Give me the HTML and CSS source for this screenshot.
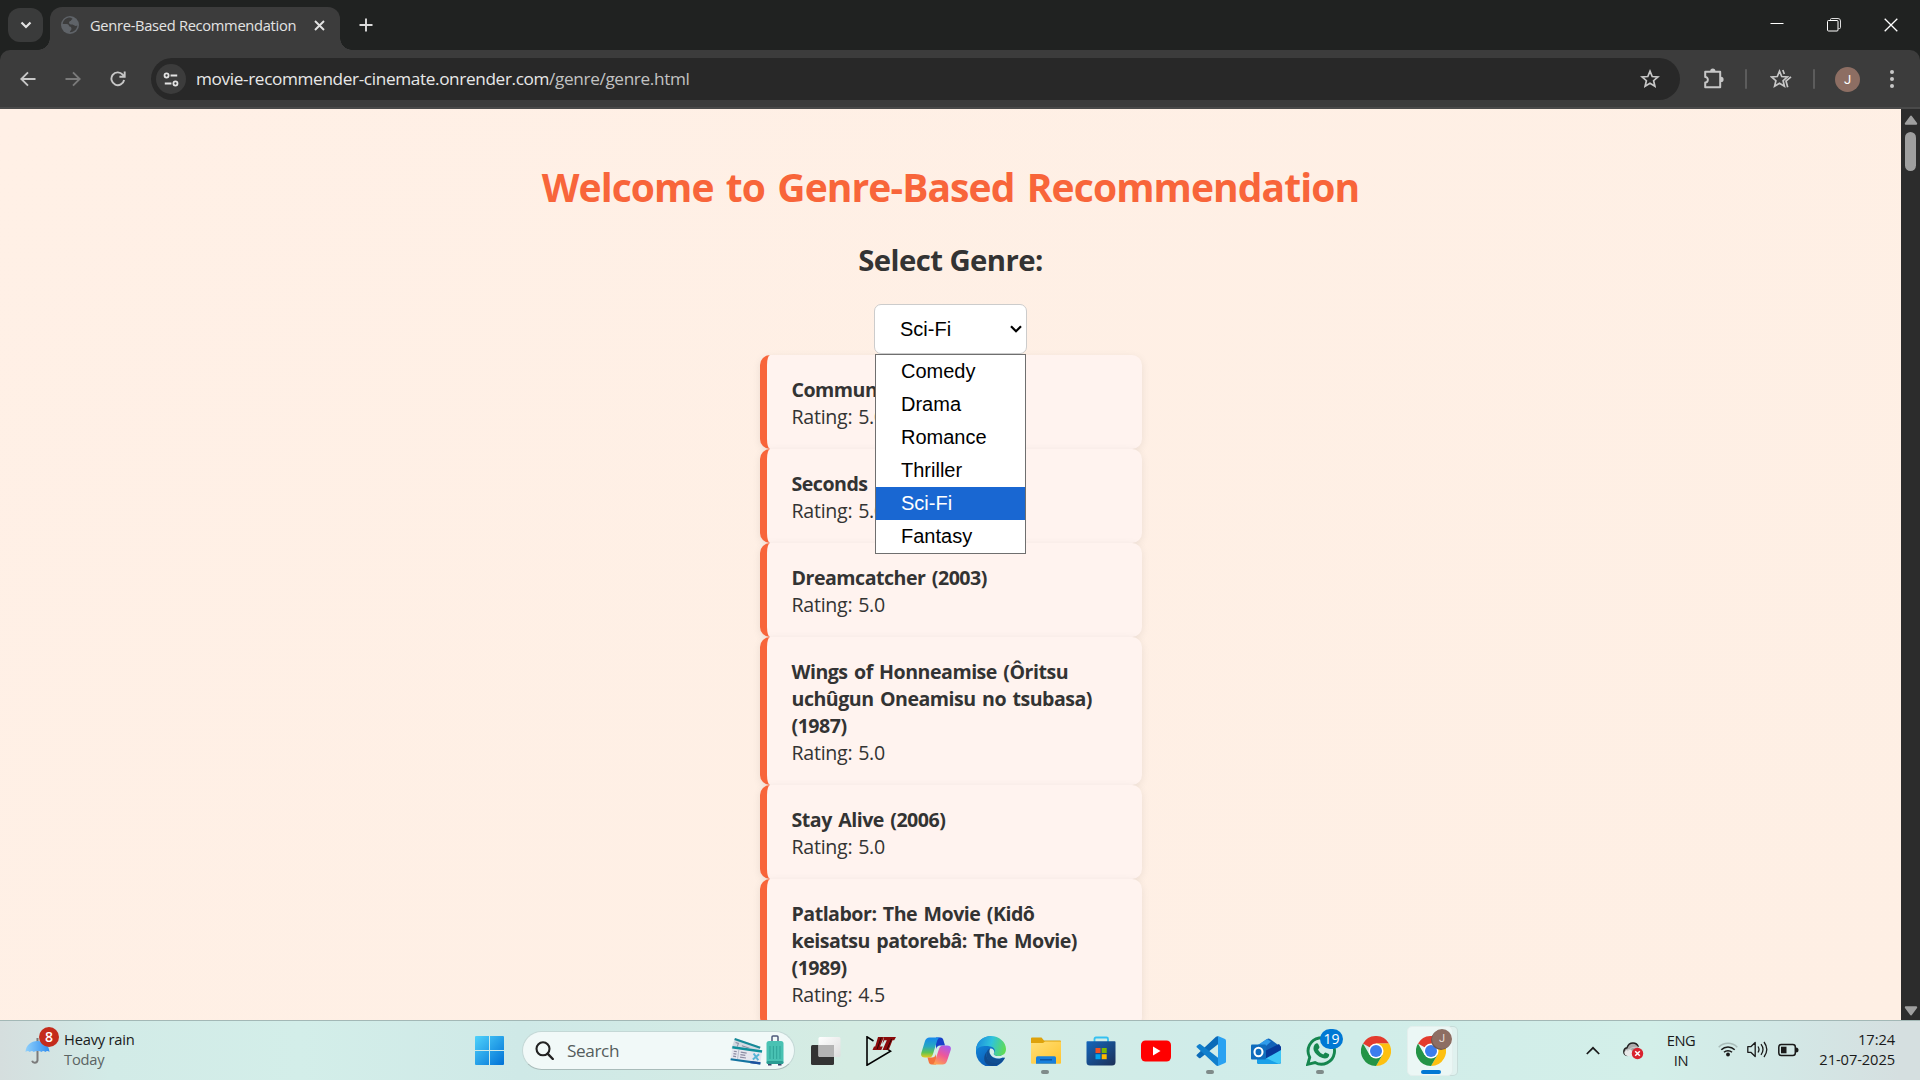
FILE: index.html
```html
<!DOCTYPE html>
<html lang="en">
<head>
<meta charset="utf-8">
<title>Genre-Based Recommendation</title>
<link rel="stylesheet" href="styles.css">
</head>
<body>
<div class="screen">
  <header class="tabstrip">
    <button class="tab-search"><svg width="12" height="8" viewBox="0 0 12 8"><path d="M1.500 1.500 6 6l4.500-4.500" fill="none" stroke="#e3e3e3" stroke-width="2.200"/></svg></button>
    <div class="tab">
      <svg class="favicon" width="18" height="18" viewBox="0 0 18 18"><circle cx="9" cy="9" r="9" fill="#5f6368"/><path d="M8 1.600C5 2 2 4.500 1.700 8l4 .1c1.600 0 2.300 1 2.300 2.200 1.500.2 2.500 1.100 2.500 2.500 0 1.500-1.500 1.700-1.700 3.500 4.200 0 7.300-3 7.600-6.700-1.200.7-2.400.6-3.300-.3-.8-.9-2.300-.9-3.500-.9-1-.1-1.600-.9-1.600-1.800 0-.9.8-1.500 1.700-1.500.3-1.300 1.200-1.700 2-2.200C10.500 1.900 9.200 1.500 8 1.600z" fill="#3c3c3c"/></svg>
      <span class="tab-title">Genre-Based Recommendation</span>
      <svg class="tab-close" width="11" height="11" viewBox="0 0 11 11"><path d="M1 1l9 9M10 1l-9 9" stroke="#e3e3e3" stroke-width="1.900"/></svg>
    </div>
    <svg class="tab-new" width="14" height="14" viewBox="0 0 14 14"><path d="M7 .5v13M.5 7h13" stroke="#dcdcdc" stroke-width="1.900"/></svg>
    <div class="window-controls">
      <svg width="14" height="14" viewBox="0 0 14 14"><path d="M.5 5.500h13" stroke="#fff"/></svg>
      <svg width="14" height="14" viewBox="0 0 14 14"><path d="M3.500 2.500v-1q0-1 1-1h6.500q2.500 0 2.500 2.500v6.500q0 1-1 1h-1" fill="none" stroke="#ddd"/><rect x=".5" y="2.500" width="10.500" height="10.500" rx="1" fill="none" stroke="#fff"/></svg>
      <svg width="14" height="14" viewBox="0 0 14 14"><path d="M.7.7l12.600 12.600M13.300.7.7 13.300" stroke="#fff" stroke-width="1.300"/></svg>
    </div>
  </header>

  <nav class="toolbar">
    <div class="nav-buttons">
      <svg width="16" height="16" viewBox="0 0 16 16"><path d="M15.500 8H1.800M8 1.300 1.300 8 8 14.700" fill="none" stroke="#c7c7c7" stroke-width="1.900"/></svg>
      <svg width="16" height="16" viewBox="0 0 16 16"><path d="M.5 8h13.700M8 1.300 14.700 8 8 14.700" fill="none" stroke="#7a7a7a" stroke-width="1.900"/></svg>
      <svg width="16" height="16" viewBox="0 0 16 16"><path d="M14.100 9A6.400 6.400 0 1 1 12.700 3.600L14.200 5.200M14.700.5v5.300H9.400" fill="none" stroke="#c7c7c7" stroke-width="1.900"/></svg>
    </div>
    <div class="omnibox">
      <span class="site-info"><svg width="16" height="15" viewBox="0 0 18 16"><g fill="none" stroke="#e3e3e3" stroke-width="2"><circle cx="4" cy="3.500" r="2.300"/><path d="M8.500 3.500h7.500M2 12.500h7.500"/><circle cx="14" cy="12.500" r="2.300"/></g></svg></span>
      <span class="url"><span class="url-host">movie-recommender-cinemate.onrender.com</span><span class="url-path">/genre/genre.html</span></span>
      <svg class="bookmark" width="20" height="20" viewBox="0 0 20 20"><path d="M10 2.200l2.200 5.300 5.700.5-4.300 3.700 1.300 5.600-4.900-3-4.900 3 1.300-5.600L2.100 8l5.700-.5z" fill="none" stroke="#c7c7c7" stroke-width="1.700"/></svg>
    </div>
    <div class="toolbar-actions">
      <svg class="extensions" width="22" height="22" viewBox="0 0 22 22"><path d="M2.200 3.700h15v15.500h-15v-4.700c3.400.3 3.600-5.700 0-5.600z" fill="none" stroke="#c7c7c7" stroke-width="2" stroke-linejoin="round"/><path d="M7.200 3a2.600 2.600 0 0 1 5.200 0zM18 8.800a2.600 2.600 0 0 1 0 5.200z" fill="#c7c7c7"/></svg>
      <span class="divider"></span>
      <svg class="favorites" width="22" height="20" viewBox="0 0 22 20"><g fill="none" stroke="#c7c7c7" stroke-width="1.700"><path d="M9.500 2.200l2.200 5.300 5.700.5-4.300 3.700 1.300 5.600-4.900-3-4.900 3 1.300-5.600L1.600 8l5.700-.5z"/><path d="M12.800 1l1.500 4M21 7.800l-5 4.200 1.700 6.200" /></g></svg>
      <span class="divider"></span>
      <span class="avatar">J</span>
      <svg class="menu" width="6" height="20" viewBox="0 0 6 20"><g fill="#c7c7c7"><circle cx="3" cy="3" r="2"/><circle cx="3" cy="10" r="2"/><circle cx="3" cy="17" r="2"/></g></svg>
    </div>
  </nav>

  <div class="viewport">
    <main class="page">
      <h1>Welcome to Genre-Based Recommendation</h1>
      <h2>Select Genre:</h2>
      <div class="select">
        <span>Sci-Fi</span>
        <svg width="12" height="8" viewBox="0 0 12 8"><path d="M1 1.300l5 5 5-5" fill="none" stroke="#000" stroke-width="2.200"/></svg>
        <ul class="options">
          <li>Comedy</li><li>Drama</li><li>Romance</li><li>Thriller</li><li class="selected">Sci-Fi</li><li>Fantasy</li>
        </ul>
      </div>
      <div class="movies">
        <article><strong>Commun</strong><span>Rating: 5.0</span></article>
        <article><strong>Seconds</strong><span>Rating: 5.0</span></article>
        <article><strong>Dreamcatcher (2003)</strong><span>Rating: 5.0</span></article>
        <article><strong>Wings of Honneamise (Ôritsu uchûgun Oneamisu no tsubasa) (1987)</strong><span>Rating: 5.0</span></article>
        <article><strong>Stay Alive (2006)</strong><span>Rating: 5.0</span></article>
        <article><strong>Patlabor: The Movie (Kidô keisatsu patorebâ: The Movie) (1989)</strong><span>Rating: 4.5</span></article>
      </div>
    </main>
    <aside class="scrollbar">
      <svg width="14" height="10" viewBox="0 0 14 10"><path d="M7 1.500 12.200 8.700H1.800z" fill="#9f9f9f" stroke="#9f9f9f" stroke-width="2" stroke-linejoin="round"/></svg>
      <span class="thumb"></span>
      <svg class="down" width="14" height="10" viewBox="0 0 14 10"><path d="M7 8.500 12.200 1.300H1.800z" fill="#9f9f9f" stroke="#9f9f9f" stroke-width="2" stroke-linejoin="round"/></svg>
    </aside>
  </div>

  <footer class="taskbar">
    <div class="weather">
      <span class="weather-icon">
        <svg width="26" height="28" viewBox="0 0 26 28"><defs><linearGradient id="umb" x1="0" x2="1"><stop offset="0" stop-color="#8fd0fb"/><stop offset="1" stop-color="#2f8df0"/></linearGradient></defs><path d="M12.500 1v22.500a2.800 2.800 0 0 1-5.400.2" fill="none" stroke="#7b7b7b" stroke-width="2"/><path d="M.5 15C1 8 6 4 12.500 4S24 8 24.500 15c-1.500-1.300-2.800-1.300-4.200 0-1.500-1.300-2.500-1.300-3.900 0-1.500-1.300-6-1.300-7.600 0-1.400-1.300-2.600-1.300-4 0-1.400-1.300-2.900-1.300-4.300 0z" fill="url(#umb)"/></svg>
        <b class="weather-badge">8</b>
      </span>
      <span class="weather-text"><span>Heavy rain</span><span class="muted">Today</span></span>
    </div>

    <div class="dock">
      <svg class="start" width="29" height="29" viewBox="0 0 29 29"><defs><linearGradient id="win" x1="0" y1="0" x2="1" y2="1"><stop offset="0" stop-color="#4fd2fb"/><stop offset="1" stop-color="#0071d6"/></linearGradient></defs><path d="M1 0h13v14H0V1q0-1 1-1zM15 0h13q1 0 1 1v13H15zM0 15h14v14H1q-1 0-1-1zM15 15h14v13q0 1-1 1H15z" fill="url(#win)"/></svg>
      <div class="search">
        <svg width="19" height="19" viewBox="0 0 19 19"><circle cx="8" cy="7.800" r="6.500" fill="none" stroke="#222" stroke-width="2.100"/><path d="M12.600 12.600l5.200 5.400" stroke="#222" stroke-width="2.400" stroke-linecap="round"/></svg>
        <span>Search</span>
        <svg class="travel" width="54" height="31" viewBox="0 0 54 31">
          <g transform="translate(5 3) rotate(19)"><path d="M0 0h27v11H0z" fill="#d3dae2"/><path d="M0 0h27v2.200H0z" fill="#158a98"/><path d="M2 4h3v5M9 5h8M9 8h8" fill="none" stroke="#8b8fa3"/></g>
          <g transform="translate(2.500 11) rotate(8)"><path d="M0 0h30v14.500H0z" fill="#e6e7ef"/><path d="M0 0h30v2.500H0z" fill="#0f8f9b"/><path d="M0 12.300h30v2.200H0z" fill="#1474a0"/><path d="M20 12.300h10v2.200H20z" fill="#1e4f9e"/><path d="M2 5h3M2 7.500h3M2 10h3M9 5h6M9 7.500h5M9 10h6" fill="none" stroke="#8d8ca3" stroke-width="1.200"/><path d="M6.800 3v9" stroke="#b9bccb"/><path d="M22 4.500l5.500 6M27.500 4.500l-5.500 6" stroke="#58b4d6" stroke-width="2"/></g>
          <path d="M42 7V2q0-1 1-1h4q1 0 1 1v5" fill="none" stroke="#4d5879" stroke-width="1.500"/><path d="M38 28.500h3.500v2H38zM48 28.500h3.500v2H48z" fill="#39456b"/><rect x="36.500" y="6" width="17" height="23" rx="2.500" fill="#49c2b3"/><rect x="36.500" y="26" width="17" height="3" rx="1.500" fill="#2a9c93"/><path d="M40 11v13M43.400 11v13M46.700 11v13M50 11v13" stroke="#2fa398" stroke-width="1"/>
        </svg>
      </div>
      <div class="apps">
        <span class="app"><svg width="30" height="30" viewBox="0 0 30 30"><defs><linearGradient id="tv" x1="0" y1="0" x2="1" y2="1"><stop offset="0" stop-color="#fff"/><stop offset="1" stop-color="#ddd"/></linearGradient></defs><rect x="0" y="9" width="23" height="20" rx="1.500" fill="#333"/><rect x="7.500" y="1" width="22" height="20" rx="1.500" fill="url(#tv)"/><path d="M7.500 9H23v12H9q-1.500 0-1.500-1.500z" fill="#b4b4b4"/></svg></span>
        <span class="app"><svg width="30" height="30" viewBox="0 0 30 30"><path d="M7.500 5 1 .8v28.400L24.500 15.200l-3-2" fill="none" stroke="#000" stroke-width="1.600"/><path d="M12 1h6l-4 9.500h2.800l-1.500 3.500H6.500L8 10.500h1.200z" fill="#8a0b0b"/><path d="M18 1h12l-1.800 3.200h-1.700L22.700 14h-6.200l4.300-9.800h-2.400l-2 3.800z" fill="#8a0b0b"/><path d="M15.200 1.500l-4 11.500M25.500 3l-4.500 10.500" stroke="#000" stroke-width=".7"/></svg></span>
        <span class="app"><svg width="30" height="28" viewBox="0 0 30 28"><defs><linearGradient id="cpa" x1="0" y1="0" x2="0" y2="1"><stop offset="0" stop-color="#1589ee"/><stop offset=".45" stop-color="#28a8bf"/><stop offset=".75" stop-color="#5fc453"/><stop offset="1" stop-color="#e9c91d"/></linearGradient><linearGradient id="cpb" x1="0.800" y1="0" x2=".3" y2="1"><stop offset="0" stop-color="#a75cf0"/><stop offset=".5" stop-color="#ee5899"/><stop offset="1" stop-color="#ffa150"/></linearGradient></defs><path d="M15 .5h4.500q2 0 2.700 2L24 8.500h-5q-3 0-4 3.500z" fill="#1640c8"/><path d="M8.500.5H19q-2 .3-2.800 3L12 17q-1 3.500-4 3.500H4Q-.8 20.500.3 16L4 4Q5.200.5 8.500.5z" fill="url(#cpa)"/><path d="M15 27.500h-4.500q-2 0-2.600-2L6.500 20.500H11q3 0 4-3.500z" fill="#f4733c"/><path d="M21.500 27.500H11q2-.3 2.800-3L18 12q1-3.500 4-3.500h4q4.800 0 3.700 4.500L26 24q-1.200 3.500-4.500 3.500z" fill="url(#cpb)"/></svg></span>
        <span class="app"><svg width="30" height="30" viewBox="0 0 30 30"><defs><linearGradient id="eda" x1="0" y1="0.300" x2="1" y2=".5"><stop offset="0" stop-color="#1b8bdc"/><stop offset=".5" stop-color="#2fc3dc"/><stop offset="1" stop-color="#5fdb55"/></linearGradient><linearGradient id="edb" x1="0" y1="0" x2="0.600" y2="1"><stop offset="0" stop-color="#1493e4"/><stop offset="1" stop-color="#0a55b0"/></linearGradient></defs><path d="M0 13C1 5 8 0 15 0l4 13 9.500 9.500A15 15 0 0 1 0 15z" fill="url(#edb)"/><path d="M0 13C1 5 7.500 0 15 0c8 0 15 6 15 13 0 5-3.500 7-7.500 7-3 0-5.500-1-4.500-3 2-3 0-6-4-6.500C9 9.500 2 10 0 15z" fill="url(#eda)"/><path d="M11 15.500c-2.500 6 2 11.500 8.500 11.300 3.500 0 6-1.800 8.500-4.300C24.500 29 18 31 13 29.300 7 27 7 20 11 15.500z" fill="#114a8b"/><path d="M11 15.500c.5-2 2.500-3 4-3-2 3-1 8 3 9.700 3.500 1.500 7.500.8 10.200-.8 1 0 .7.800 0 1.800-4 5-12 5.500-16 .8-2-2.500-2-6-1.200-8.500z" fill="#114f93"/><path d="M14.200 12.600c2.200-.4 4 1.300 4 3.400 0 1-.6 1.500-.4 2.200.4 1 2 1.800 4.200 1.900 1.900.1 4-.2 5.700-1.600-.3 1.200.7 1.700.5 2.500-2.700 1.500-7 2.300-10.300.6-4-2-5.400-6-3.700-9z" fill="#d6eeea"/></svg></span>
        <span class="app running"><svg width="30" height="27" viewBox="0 0 30 27"><defs><linearGradient id="fd" x1="0" y1="0" x2="1" y2="1"><stop offset="0" stop-color="#ffdf77"/><stop offset="1" stop-color="#ffc42e"/></linearGradient></defs><path d="M0 1.500Q0 .5 1 .5h9.500l2.500 3h16q1 0 1 1V9H0z" fill="#dea20b"/><path d="M0 6h12l2-1.500h16V26q0 .7-1 .7H1q-1 0-1-1z" fill="url(#fd)"/><path d="M5 26.700v-6q0-1.500 1.500-1.500h17q1.500 0 1.500 1.500v6z" fill="#1780dc"/><path d="M9 22.800h12" stroke="#0a4e9b" stroke-width="1.300"/></svg></span>
        <span class="app"><svg width="30" height="30" viewBox="0 0 30 30"><defs><linearGradient id="ms" x1="0" y1="0" x2="1" y2="1"><stop offset="0" stop-color="#1466bb"/><stop offset="1" stop-color="#1c3058"/></linearGradient></defs><path d="M8.500 6V3q0-1.500 1.500-1.500h10.500Q22 1.500 22 3v3" fill="none" stroke="#35c1f1" stroke-width="1.800"/><path d="M.5 6q0-.8.800-.8h27.400q.8 0 .8.800v20q0 3.500-3.500 3.500H4Q.5 29.500.5 26z" fill="url(#ms)"/><path d="M9.500 12h5v5h-5z" fill="#f25022"/><path d="M15.700 12h5v5h-5z" fill="#7fba00"/><path d="M9.500 18.200h5v5h-5z" fill="#00a4ef"/><path d="M15.700 18.200h5v5h-5z" fill="#ffb900"/></svg></span>
        <span class="app"><svg width="30" height="30" viewBox="0 0 30 30"><rect y="4.500" width="30" height="21" rx="4.500" fill="#f00"/><path d="M12 10.500v9l7.500-4.500z" fill="#fff"/></svg></span>
        <span class="app running"><svg width="30" height="30" viewBox="0 0 30 30"><path d="M22 0l7 3q1 .5 1 1.500v21q0 1-1 1.500l-7 3z" fill="#2aa2f2"/><path d="M22 .2v8L4.500 22q-.8.600-1.500 0l-2-1.700q-1-.9 0-1.800L20 .8q1-.9 2-.6z" fill="#0a6ab8"/><path d="M22 29.800v-8L4.500 8.200q-.8-.6-1.500 0L1 9.800q-1 .9 0 1.800L20 29.200q1 .9 2 .6z" fill="#107fcd"/></svg></span>
        <span class="app"><svg width="30" height="30" viewBox="0 0 30 30"><path d="M6 10 16 3q1.500-1 3 0l11 8v15q0 2-2 2H8q-2 0-2-2z" fill="#1262b8"/><path d="M6 9.500 16 3l4 2.500-9 8z" fill="#2f9bea"/><path d="M8 18 28 8l2 3v6L16 25z" fill="#07399a"/><path d="M30 14v12q0 2-2 2H8l6-5z" fill="#3fc6f6"/><path d="M6 18l22 10H8q-2 0-2-2z" fill="#1aa0e8"/><rect y="8.500" width="15" height="15" rx="1" fill="#0f6cbd"/><ellipse cx="7.500" cy="16" rx="4" ry="4.300" fill="none" stroke="#fff" stroke-width="2.100"/></svg></span>
        <span class="app running"><svg width="30" height="30" viewBox="0 0 30 30"><path d="M1.700 28.300l2-7A13.200 13.200 0 1 1 9 26.600z" fill="none" stroke="#15864f" stroke-width="2.900"/><path d="M10 7.500q1.500-.6 2.200.5l1.300 3q.2.800-1.500 2.700 1.800 3.300 5.300 4.700 1.600-2 2.200-1.900l3.300 1.600q.8.600.2 2c-1 2.500-4 3-6.500 2C12 20.500 9 17.500 7.700 14.200 7 11.500 8 8.500 10 7.500z" fill="#15864f"/></svg><b class="count">19</b></span>
        <span class="app"><svg width="30" height="30" viewBox="0 0 30 30"><use href="#chrome"/></svg></span>
        <span class="app active"><svg width="30" height="30" viewBox="0 0 30 30"><g id="chrome"><path d="M15 15 2 7.500A15 15 0 0 1 28 7.500H15z" fill="#e33b2e"/><path d="M15 7.500h13A15 15 0 0 1 15 30l6.500-11.250z" fill="#fdc010"/><path d="M8.500 18.750 2 7.500A15 15 0 0 0 15 30l6.500-11.250z" fill="#239446"/><circle cx="15" cy="15" r="7.500" fill="#fff"/><circle cx="15" cy="15" r="6" fill="#3b7ded"/></g></svg><b class="profile">J</b></span>
      </div>
    </div>

    <div class="tray">
      <svg class="chevron" width="14" height="9" viewBox="0 0 14 9"><path d="M.8 8 7 1.800 13.200 8" fill="none" stroke="#1a1a1a" stroke-width="1.700"/></svg>
      <svg class="cloud" width="21" height="18" viewBox="0 0 21 18"><path d="M4.500 13.500Q.8 13 .8 9.700.8 6.500 4 5.800 5.500 1 10 1q4 0 5.500 4" fill="#aaa" stroke="#222" stroke-width="1.400"/><path d="M4.500 14Q1 13.500 1.500 10q3-4 7-2l2 6z" fill="#e9e9e9"/><path d="M15.500 5Q9 4 4 9" stroke="#ccc" fill="none"/><circle cx="14.500" cy="11.500" r="5.700" fill="#d9232e"/><path d="M12.200 9.200l4.600 4.600M16.800 9.200l-4.600 4.600" stroke="#fff" stroke-width="1.500"/></svg>
      <span class="lang"><span>ENG</span><span>IN</span></span>
      <svg class="wifi" width="20" height="16" viewBox="0 0 20 16"><g fill="none" stroke="#1a1a1a" stroke-width="1.500"><path d="M.7 6.200a13 13 0 0 1 18.600 0" stroke="#a9bcb9"/><path d="M3.300 8.700a9.500 9.500 0 0 1 13.400 0"/><path d="M6 11.300a5.700 5.700 0 0 1 8 0"/></g><circle cx="10" cy="13.500" r="1.900" fill="#1a1a1a"/></svg>
      <svg class="volume" width="21" height="17" viewBox="0 0 21 17"><g fill="none" stroke="#1a1a1a" stroke-width="1.300"><path d="M.8 5.700h3l4.400-4.200v14L3.800 11.300h-3z" stroke-linejoin="round"/><path d="M11 5.500q2 3 0 6M14 3.200q4 5.300 0 10.600M17 1q5.600 7.500 0 15"/></g></svg>
      <svg class="battery" width="21" height="14" viewBox="0 0 21 14"><rect x=".8" y="1.500" width="16.500" height="11" rx="2.500" fill="none" stroke="#1a1a1a" stroke-width="1.500"/><path d="M3 3.700h5.500v6.600H3z" fill="#1a1a1a"/><path d="M18 4.500q2.500 0 2.500 2.500T18 9.500z" fill="#1a1a1a"/></svg>
      <span class="clock"><span>17:24</span><span>21-07-2025</span></span>
    </div>
  </footer>
</div>
</body>
</html>
```
FILE: styles.css
```css
* { box-sizing: border-box; margin: 0; padding: 0; }
body { width: 1920px; height: 1080px; overflow: hidden; font-family: "Open Sans", "Noto Sans", sans-serif; }
svg { display: block; flex: none; }
.screen { display: flex; flex-direction: column; width: 1920px; height: 1080px; background: #202221; }

.tabstrip { display: flex; height: 50px; flex: none; padding-left: 8px; background: #202221; }
.tab-search { width: 35px; height: 34px; margin: 8px 7px 0 0; display: grid; place-items: center; background: #3a3b3b; border: 0; border-radius: 12px; }
.tab { position: relative; display: flex; align-items: center; width: 290px; height: 43px; margin-top: 7px; padding: 0 15px 7px 11px; background: #3c3c3c; border-radius: 12px 12px 0 0; }
.tab::before, .tab::after { content: ""; position: absolute; bottom: 0; width: 12px; height: 12px; }
.tab::before { left: -12px; background: radial-gradient(circle at 0 0, transparent 11.5px, #3c3c3c 12px); }
.tab::after { right: -12px; background: radial-gradient(circle at 100% 0, transparent 11.5px, #3c3c3c 12px); }
.tab-title { flex: 1; margin-left: 11px; font-size: 14.7px; letter-spacing: -.31px; line-height: 20px; color: #e3e3e3; white-space: nowrap; }
.tab-new { margin: 18px 0 0 19px; }
.window-controls { display: flex; gap: 43px; margin: 18px 22px 0 auto; }

.toolbar { display: flex; align-items: flex-start; flex: none; height: 59px; padding-top: 8px; background: #3c3c3c; border-bottom: 2px solid #4a4a4a; border-radius: 10px 10px 0 0; }
.nav-buttons { display: flex; gap: 29px; width: 151px; padding: 13px 0 0 20px; flex: none; }
.omnibox { display: flex; align-items: center; width: 1529px; height: 42px; padding: 0 20px 0 5px; background: #282828; border-radius: 21px; }
.site-info { display: grid; place-items: center; width: 30px; height: 30px; border-radius: 50%; background: #3c3c3c; }
.url { flex: 1; margin-left: 10px; font-size: 17.2px; letter-spacing: -.36px; line-height: 24px; color: #e8e8e8; white-space: nowrap; }
.url-path { color: #c2c2c2; }
.toolbar-actions { display: flex; align-items: center; height: 42px; }
.extensions { margin-left: 23px; }
.divider { width: 2px; height: 20px; background: #5c5c5c; border-radius: 1px; }
.extensions + .divider { margin-left: 20px; }
.favorites { margin-left: 23px; }
.favorites + .divider { margin-left: 21px; }
.avatar { display: grid; place-items: center; width: 25px; height: 25px; margin-left: 20px; border-radius: 50%; background: #8d6e63; color: #fff; font: 13px/25px Roboto, sans-serif; }
.menu { margin-left: 29px; }

.viewport { display: flex; flex: none; height: 911px; }
.page { display: flex; flex-direction: column; align-items: center; width: 1901px; height: 911px; padding-top: 51px; overflow: hidden; background: linear-gradient(135deg, #fff0e6, #feefe4); color: #333; }
h1 { font-size: 39px; letter-spacing: -.9px; word-spacing: 3px; line-height: 54px; color: #f8653a; white-space: nowrap; }
h2 { margin: 26px 0 24px; font-size: 29.3px; letter-spacing: -.56px; line-height: 40px; white-space: nowrap; }
.select { position: relative; z-index: 1; display: flex; align-items: center; justify-content: space-between; width: 153px; height: 50px; flex: none; padding: 0 4px 0 25px; background: #fff; border: 1px solid #ccc; border-radius: 7px; font: 20px "Liberation Sans", Arial, sans-serif; color: #000; }
.options { position: absolute; left: 0; top: 49px; width: 151px; border: 1px solid #6f6f6f; background: #fff; list-style: none; }
.options li { height: 33px; padding-left: 25px; line-height: 33px; }
.options .selected { background: #1967d2; color: #fff; }
.movies { width: 382px; margin-top: 1px; }
article { display: flex; flex-direction: column; padding: 21px 45px 19px 25px; border-left: 7px solid #f8653a; border-radius: 10px; background: #fff3ef; box-shadow: 0 2px 8px rgba(0, 0, 0, .08); font-size: 19.6px; letter-spacing: -.27px; word-spacing: 1px; line-height: 27px; }
article strong { letter-spacing: -.5px; word-spacing: 1.8px; }

.scrollbar { display: flex; flex-direction: column; align-items: center; width: 19px; padding: 6px 0 4px; background: #2c2c2c; }
.thumb { width: 11px; height: 39px; margin-top: 7px; border-radius: 6px; background: #9f9f9f; }
.down { margin-top: auto; }

.taskbar { display: flex; flex: none; height: 60px; border-top: 1px solid #a3b8b6; background: linear-gradient(90deg, #d5dede 0, #d2ebe7 110px, #d3eee9 300px, #cfe9e7 520px, #d5ece3 850px, #d0ece9 1200px, #d3efe9 1650px, #d3e8e6 1780px, #d5dfe0 1900px); color: #1a1a1a; font-size: 14.7px; letter-spacing: -.1px; line-height: 20px; }
.weather { display: flex; width: 475px; padding-left: 25px; }
.weather-icon { position: relative; width: 26px; padding-top: 16px; }
.weather-badge { position: absolute; left: 14px; top: 6px; width: 20px; height: 20px; border-radius: 50%; background: #c42b1c; color: #fff; font-size: 14px; font-weight: 600; text-align: center; }
.weather-text { display: flex; flex-direction: column; margin: 8px 0 0 13px; letter-spacing: -.2px; }
.muted { color: #5b6463; }
.dock { display: flex; }
.start { margin-top: 15px; }
.search { display: flex; align-items: center; width: 273px; height: 39px; margin: 10px 3px 0 18px; padding: 0 10px 0 12px; background: #f1f9f8; border: 1px solid #c4d8d6; border-bottom-color: #a9bcba; border-radius: 20px; font-size: 17.2px; letter-spacing: -.4px; color: #555d5c; }
.search span { margin-left: 13px; }
.travel { margin-left: auto; }
.apps { display: flex; }
.app { position: relative; display: grid; place-items: center; width: 55px; height: 59px; }
.running::after, .active::after { content: ""; position: absolute; top: 49px; left: 23px; width: 8px; height: 4px; border-radius: 2px; background: #7f8b8a; }
.active::before { content: ""; position: absolute; left: 4px; top: 5px; width: 44px; height: 48px; border-radius: 5px; background: #ebf7f5; border: 1px solid #e3efed; box-shadow: 5px 0 0 -1px #e0f2ef, 5px 0 0 #c8dcd9; }
.active svg { position: relative; }
.active::after { left: 18px; width: 20px; background: #0078d4; }
.count, .profile { position: absolute; color: #fff; text-align: center; font-weight: 400; }
.count { left: 27px; top: 8px; width: 23px; height: 20px; border-radius: 10px; background: #0078d4; font-size: 14px; }
.profile { left: 29px; top: 8px; width: 20px; height: 20px; border-radius: 50%; background: #8d6e63; box-shadow: -1px 1px 0 #6d5750; color: #e6dcd8; font: 11px/20px Roboto, sans-serif; }
.tray { display: flex; margin-left: auto; padding-right: 25px; }
.chevron { margin-top: 25px; }
.cloud { margin: 21px 0 0 23px; }
.lang { display: flex; flex-direction: column; align-items: center; width: 30px; margin-top: 9px; margin-left: 22px; letter-spacing: -.4px; }
.wifi { margin: 20px 0 0 22px; }
.volume { margin: 20px 0 0 9px; }
.battery { margin: 22px 0 0 10px; }
.clock { display: flex; flex-direction: column; align-items: flex-end; width: 96px; margin-top: 8px; }
```
